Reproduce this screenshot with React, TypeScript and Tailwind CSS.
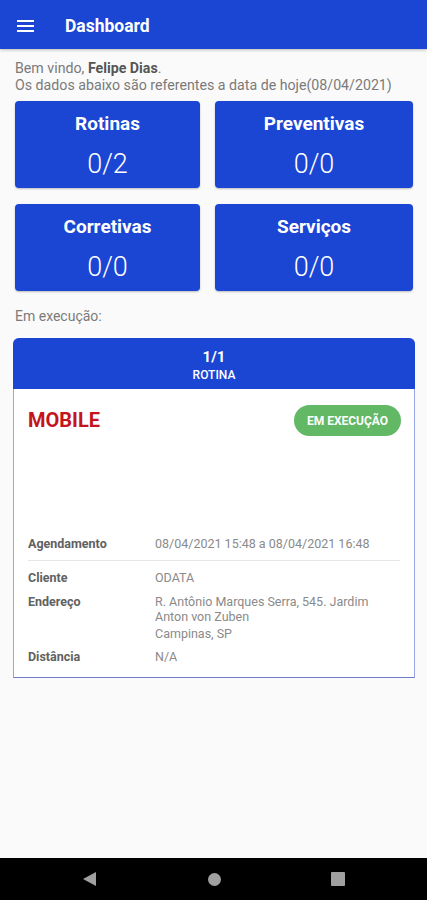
import React from "react";

function StatCard({ title, value }: { title: string; value: string }) {
  return (
    <div className="h-[87px] rounded-[4px] bg-[#1b45d3] shadow-[0_1px_2px_rgba(0,0,0,0.25)] flex flex-col items-center text-white">
      <div className="mt-[10px] text-[19px] leading-[25px] font-bold">{title}</div>
      <div className="mt-[13px] text-[27px] leading-[30px] font-light">{value}</div>
    </div>
  );
}

function Row({ label, children }: { label: string; children: React.ReactNode }) {
  return (
    <div className="flex text-[12.5px] leading-[16px]">
      <div className="w-[127px] shrink-0 font-bold text-[#616161]">{label}</div>
      <div className="text-[#8a8a8a]">{children}</div>
    </div>
  );
}

export default function App() {
  return (
    <div
      className="w-[427px] h-[900px] bg-[#fafafa] flex flex-col overflow-hidden"
      style={{ fontFamily: "Roboto, 'Noto Sans', sans-serif" }}
    >
      <header className="h-[49px] pt-[3px] bg-[#1b45d3] flex items-center shrink-0 shadow-[0_1px_3px_rgba(0,0,0,0.25)]">
        <div className="ml-[17px] w-[17px] flex flex-col gap-[3px]">
          <div className="h-[2px] bg-white" />
          <div className="h-[2px] bg-white" />
          <div className="h-[2px] bg-white" />
        </div>
        <div className="ml-[31px] text-white text-[17.5px] font-bold">Dashboard</div>
      </header>

      <div className="flex-1 px-[15px]">
        <div className="mt-[11px] text-[14.2px] leading-[17px] text-[#7a7a7a]">
          <div>
            Bem vindo, <span className="font-bold text-[#555]">Felipe Dias</span>.
          </div>
          <div>Os dados abaixo são referentes a data de hoje(08/04/2021)</div>
        </div>

        <div className="mt-[7px] grid grid-cols-[185px_198px] gap-x-[15px] gap-y-[16px]">
          <StatCard title="Rotinas" value="0/2" />
          <StatCard title="Preventivas" value="0/0" />
          <StatCard title="Corretivas" value="0/0" />
          <StatCard title="Serviços" value="0/0" />
        </div>

        <div className="mt-[17px] text-[14px] leading-[17px] text-[#7a7a7a]">Em execução:</div>

        <div className="mt-[13px] -mx-[2px] w-[402px] rounded-t-[6px] bg-white border border-[#9aa6e6] border-b-[#6f7bd0]">
          <div className="h-[51px] -m-px rounded-t-[6px] bg-[#1b45d3] flex flex-col items-center text-white">
            <div className="mt-[10px] text-[15px] leading-[18px] font-bold">1/1</div>
            <div className="mt-[2px] text-[12px] leading-[14px] font-medium">ROTINA</div>
          </div>
          <div className="px-[14px] pt-[17px] pb-[12px]">
            <div className="flex items-start justify-between">
              <div className="mt-[4px] text-[20px] leading-[22px] font-bold text-[#c3151b]">MOBILE</div>
              <div className="h-[31px] w-[107px] -mr-[1px] rounded-full bg-[#62b865] text-white text-[12px] font-bold flex items-center justify-center">
                EM EXECUÇÃO
              </div>
            </div>
            <div className="mt-[100px]">
              <Row label="Agendamento">08/04/2021 15:48 a 08/04/2021 16:48</Row>
            </div>
            <div className="mt-[8px] h-px bg-[#e6e6e6]" />
            <div className="mt-[9px]">
              <Row label="Cliente">ODATA</Row>
            </div>
            <div className="mt-[8px]">
              <Row label="Endereço">
                <div className="leading-[15px]">
                  R. Antônio Marques Serra, 545. Jardim
                  <br />
                  Anton von Zuben
                </div>
                <div className="mt-[2px]">Campinas, SP</div>
              </Row>
            </div>
            <div className="mt-[7px]">
              <Row label="Distância">N/A</Row>
            </div>
          </div>
        </div>
      </div>

      <div className="h-[42px] bg-black shrink-0 flex items-center pl-[83px]">
        <div className="w-0 h-0 border-y-[7px] border-y-transparent border-r-[13px] border-r-[#a0a0a0]" />
        <div className="ml-[112px] w-[13px] h-[13px] rounded-full bg-[#a0a0a0]" />
        <div className="ml-[110px] w-[14px] h-[14px] rounded-[1px] bg-[#a0a0a0]" />
      </div>
    </div>
  );
}
